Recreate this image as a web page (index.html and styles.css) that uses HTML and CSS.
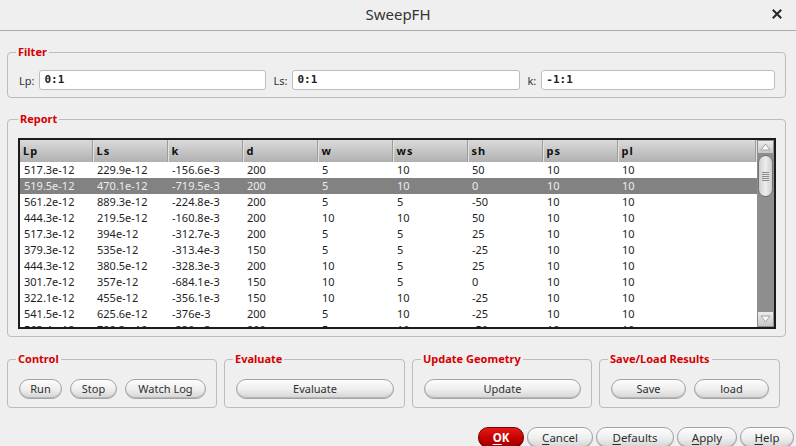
FILE: index.html
```html
<!DOCTYPE html>
<html>
<head>
<meta charset="utf-8">
<link rel="stylesheet" href="styles.css">
</head>
<body>
<div class="titlebar">
  <span></span>
  <span class="title">SweepFH</span>
  <svg class="close" width="10" height="10" viewBox="0 0 10 10"><path d="M1.5 1.5L8.5 8.5M8.5 1.5L1.5 8.5" stroke="#262626" stroke-width="2" stroke-linecap="square"/></svg>
</div>
<div class="main">
  <fieldset class="group filter">
    <legend>Filter</legend>
    <div class="filter-row">
      <label class="lbl">Lp:</label><div class="input w1">0:1</div>
      <label class="lbl gapl">Ls:</label><div class="input w2">0:1</div>
      <label class="lbl gapl">k:</label><div class="input w3">-1:1</div>
    </div>
  </fieldset>

  <fieldset class="group report">
    <legend>Report</legend>
    <div class="frame">
      <div class="grid">
        <table>
          <colgroup><col class="c0"><col class="c"><col class="c"><col class="c"><col class="c"><col class="c"><col class="c"><col class="c"><col></colgroup>
          <thead><tr><th>Lp</th><th>Ls</th><th>k</th><th>d</th><th>w</th><th>ws</th><th>sh</th><th>ps</th><th>pl</th></tr></thead>
          <tbody>
            <tr><td>517.3e-12</td><td>229.9e-12</td><td>-156.6e-3</td><td>200</td><td>5</td><td>10</td><td>50</td><td>10</td><td>10</td></tr>
            <tr class="sel"><td>519.5e-12</td><td>470.1e-12</td><td>-719.5e-3</td><td>200</td><td>5</td><td>10</td><td>0</td><td>10</td><td>10</td></tr>
            <tr><td>561.2e-12</td><td>889.3e-12</td><td>-224.8e-3</td><td>200</td><td>5</td><td>5</td><td>-50</td><td>10</td><td>10</td></tr>
            <tr><td>444.3e-12</td><td>219.5e-12</td><td>-160.8e-3</td><td>200</td><td>10</td><td>10</td><td>50</td><td>10</td><td>10</td></tr>
            <tr><td>517.3e-12</td><td>394e-12</td><td>-312.7e-3</td><td>200</td><td>5</td><td>5</td><td>25</td><td>10</td><td>10</td></tr>
            <tr><td>379.3e-12</td><td>535e-12</td><td>-313.4e-3</td><td>150</td><td>5</td><td>5</td><td>-25</td><td>10</td><td>10</td></tr>
            <tr><td>444.3e-12</td><td>380.5e-12</td><td>-328.3e-3</td><td>200</td><td>10</td><td>5</td><td>25</td><td>10</td><td>10</td></tr>
            <tr><td>301.7e-12</td><td>357e-12</td><td>-684.1e-3</td><td>150</td><td>10</td><td>5</td><td>0</td><td>10</td><td>10</td></tr>
            <tr><td>322.1e-12</td><td>455e-12</td><td>-356.1e-3</td><td>150</td><td>10</td><td>10</td><td>-25</td><td>10</td><td>10</td></tr>
            <tr><td>541.5e-12</td><td>625.6e-12</td><td>-376e-3</td><td>200</td><td>5</td><td>10</td><td>-25</td><td>10</td><td>10</td></tr>
            <tr><td>563.4e-12</td><td>798.3e-12</td><td>-330e-3</td><td>200</td><td>5</td><td>10</td><td>-50</td><td>10</td><td>10</td></tr>
          </tbody>
        </table>
      </div>
      <div class="scrollbar">
        <div class="sb-btn up"><svg width="11" height="8" viewBox="0 0 11 8"><path d="M5.5 1L10 7H1Z" fill="#fafafa" stroke="#a0a0a0" stroke-width="1"/></svg></div>
        <div class="thumb"><span></span><span></span><span></span><span></span><span></span></div>
        <div class="sb-space"></div>
        <div class="sb-btn down"><svg width="11" height="8" viewBox="0 0 11 8"><path d="M5.5 7L10 1H1Z" fill="#fafafa" stroke="#a0a0a0" stroke-width="1"/></svg></div>
      </div>
    </div>
  </fieldset>

  <div class="bottom-groups">
    <fieldset class="group g-control">
      <legend>Control</legend>
      <div class="btn-row">
        <button class="btn b-run">Run</button>
        <button class="btn b-stop">Stop</button>
        <button class="btn b-watch">Watch Log</button>
      </div>
    </fieldset>
    <fieldset class="group g-eval">
      <legend>Evaluate</legend>
      <div class="btn-row"><button class="btn full">Evaluate</button></div>
    </fieldset>
    <fieldset class="group g-update">
      <legend>Update Geometry</legend>
      <div class="btn-row"><button class="btn full">Update</button></div>
    </fieldset>
    <fieldset class="group g-save">
      <legend>Save/Load Results</legend>
      <div class="btn-row">
        <button class="btn b-save">Save</button>
        <button class="btn b-save">load</button>
      </div>
    </fieldset>
  </div>

  <div class="dialog-buttons">
    <button class="btn ok d-ok"><u>O</u>K</button>
    <button class="btn d-cancel"><u>C</u>ancel</button>
    <button class="btn d-defaults"><u>D</u>efaults</button>
    <button class="btn d-apply"><u>A</u>pply</button>
    <button class="btn d-help"><u>H</u>elp</button>
  </div>
</div>
</body>
</html>
```
FILE: styles.css
```css
* { box-sizing: border-box; }
html, body { margin: 0; padding: 0; }
body {
  width: 796px;
  height: 446px;
  overflow: hidden;
  background: #efefef;
  font-family: "Noto Sans", "Open Sans", sans-serif;
  font-size: 11px;
  color: #2a2a2a;
}

.titlebar {
  height: 31px;
  border-bottom: 1px solid #a9a9a9;
  display: grid;
  grid-template-columns: 1fr auto 1fr;
  align-items: center;
}
.title {
  font-size: 15px;
  color: #333;
  line-height: 20px;
  padding-bottom: 2px;
}
.close {
  justify-self: end;
  margin-right: 14px;
  margin-bottom: 3px;
}

.main {
  padding: 0 10px 0 7px;
}

.group {
  margin: 0;
  padding: 0 0 0 8px;
  border: 1px solid #bcbcbc;
  border-radius: 4px;
  min-width: 0;
}
.group legend {
  padding: 0 2px;
  font-weight: bold;
  color: #d40000;
  font-size: 11px;
  line-height: 14px;
}

.filter {
  margin-top: 14px;
  padding-top: 11px;
  padding-bottom: 7px;
}
.filter-row {
  display: flex;
  align-items: center;
  padding-left: 3px;
}
.lbl {
  color: #333;
  margin-right: 5px;
}
.gapl { margin-left: 7px; }
.input {
  height: 20px;
  background: #fff;
  border: 1px solid #bdbdbd;
  border-radius: 3px;
  font-family: "DejaVu Sans Mono", monospace;
  font-size: 11px;
  line-height: 18px;
  padding-left: 4px;
  color: #222;
  font-weight: bold;
}
.w1 { width: 227px; }
.w2 { width: 228px; }
.w3 { width: 234px; }

.report {
  margin-top: 14px;
  padding-top: 12px;
  padding-bottom: 7px;
  padding-left: 10px;
}
.frame {
  width: 758px;
  height: 191px;
  border: 2px solid #1c1c1c;
  display: flex;
  background: #fff;
}
.grid {
  flex: 1;
  overflow: hidden;
}
table {
  border-collapse: collapse;
  table-layout: fixed;
  width: 737px;
}
col.c0 { width: 73px; }
col.c { width: 75px; }
th {
  height: 22px;
  padding: 0 0 0 3px;
  text-align: left;
  font-weight: bold;
  letter-spacing: 1px;
  color: #111;
  background: linear-gradient(to bottom, #dadada, #b0b0b0);
  border-right: 1px solid #e2e2e2;
  box-shadow: inset -1px 0 #9c9c9c;
  line-height: 20px;
  white-space: nowrap;
}
td {
  height: 16px;
  padding: 0 0 0 4px;
  line-height: 16px;
  color: #1e1e1e;
  white-space: nowrap;
  overflow: hidden;
}
tr.sel td {
  background: #828282;
  color: #ececec;
}

.scrollbar {
  width: 17px;
  background: #8e8e8e;
  display: flex;
  flex-direction: column;
  padding: 1px 1px 1px 1px;
}
.sb-btn {
  background: linear-gradient(to bottom, #ececec, #c6c6c6);
  display: flex;
  align-items: center;
  justify-content: center;
}
.sb-btn.up { height: 12px; }
.sb-btn.down { height: 14px; }
.thumb {
  margin-top: 2px;
  height: 42px;
  border: 1px solid #707070;
  border-radius: 8px;
  background: linear-gradient(to right, #cfcfcf, #ededed 50%, #cdcdcd);
  display: flex;
  flex-direction: column;
  justify-content: center;
  align-items: center;
  gap: 1px;
}
.thumb span {
  display: block;
  width: 7px;
  height: 1px;
  background: #8a8a8a;
}
.sb-space { flex: 1; }

.bottom-groups {
  display: flex;
  gap: 7px;
  margin-top: 15px;
}
.bottom-groups .group {
  padding-top: 13px;
  padding-bottom: 8px;
}
.g-control { width: 210px; }
.g-eval { width: 181px; }
.g-update { width: 180px; }
.g-save { width: 181px; }
.btn-row {
  display: flex;
  gap: 8px;
  padding-left: 3px;
}
.g-eval .btn-row, .g-update .btn-row { padding-right: 10px; }

.btn {
  height: 20px;
  border: 1px solid #a3a3a3;
  border-radius: 10px;
  background: linear-gradient(to bottom, #fdfdfd 0%, #ededed 55%, #d4d4d4 100%);
  box-shadow: inset 0 -1px 0 #b8b8b8;
  font-family: "Noto Sans", "Open Sans", sans-serif;
  font-size: 11px;
  line-height: 16px;
  color: #2e2e2e;
  padding: 0;
  text-align: center;
}
.b-run { width: 43px; }
.b-stop { width: 47px; }
.b-watch { width: 81px; }
.full { flex: 1; }
.b-save { width: 75px; }

.dialog-buttons {
  display: flex;
  justify-content: flex-end;
  gap: 3px;
  margin-top: 19px;
  margin-right: -8px;
}
.dialog-buttons .btn {
  height: 21px;
  font-size: 11.5px;
}
.dialog-buttons u { text-decoration-thickness: 1px; text-underline-offset: 2px; }
.d-ok { width: 46px; }
.d-cancel { width: 66px; }
.d-defaults { width: 78px; }
.d-apply { width: 60px; }
.d-help { width: 54px; }
.btn.ok {
  background: linear-gradient(to bottom, #e41a1a 0%, #c40000 55%, #a00000 100%);
  border-color: #7a0000;
  box-shadow: inset 0 -1px 0 #8a0000;
  color: #fff;
  font-weight: bold;
}
```
